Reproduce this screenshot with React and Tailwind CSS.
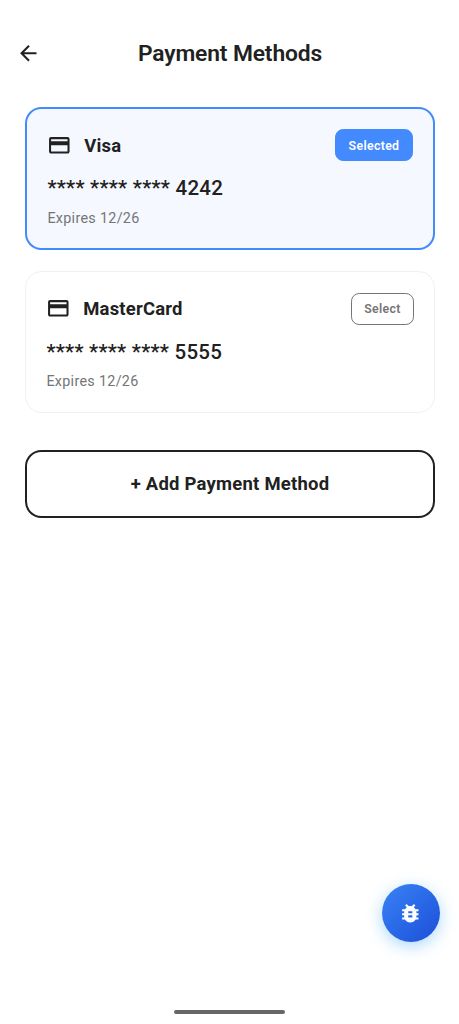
import { MdArrowBack, MdBugReport, MdPayment } from 'react-icons/md';

const methods = [
    { id: 1, brand: 'Visa', last4: '4242', expires: '12/26', selected: true },
    { id: 2, brand: 'MasterCard', last4: '5555', expires: '12/26', selected: false },
];

function PaymentCard({ method }) {
    const { brand, last4, expires, selected } = method;

    return (
        <li
            className={`rounded-[16.4px] pr-5 pl-[20.4px] ${
                selected
                    ? 'h-[143px] border-2 border-[#448aff] bg-[#f5f8ff] pt-5'
                    : 'h-[142px] border border-[#f0f0f0] bg-white pt-[20.5px]'
            }`}
        >
            <div className="flex h-8 items-center justify-between">
                <div className="flex items-center gap-[12.3px]">
                    <MdPayment className="size-[24.6px]" />
                    <h2
                        className={`text-[18.45px] leading-6 font-bold tracking-[0.2px] ${
                            selected ? 'pt-[2px]' : 'pt-0'
                        }`}
                    >
                        {brand}
                    </h2>
                </div>
                <button
                    className={`h-8 rounded-[8.2px] border text-[12.3px] leading-4 font-semibold tracking-[0.35px] ${
                        selected
                            ? 'w-[78px] border-[#448aff] bg-[#448aff] pt-[2px] text-white'
                            : 'w-[63px] border-[#757575] pt-0 text-[#757575]'
                    }`}
                >
                    {selected ? 'Selected' : 'Select'}
                </button>
            </div>
            <p className="mt-3 text-[20.5px] leading-[30px] font-medium tracking-[0.25px]">**** **** **** {last4}</p>
            <p className="mt-[5.5px] text-[14.35px] leading-5 tracking-[0.3px] text-[#757575]">Expires {expires}</p>
        </li>
    );
}

export default function App() {
    return (
        <div className="relative flex h-screen flex-col bg-white font-[Roboto,sans-serif] text-[#212121]">
            <header className="grid grid-cols-[57px_1fr_56px] items-center pt-[38px]">
                <button className="flex justify-center" aria-label="Back">
                    <MdArrowBack className="size-[24.6px]" />
                </button>
                <h1 className="pt-px text-center text-[22.8px] leading-[30px] font-semibold tracking-[-0.13px]">Payment Methods</h1>
            </header>

            <main className="pt-[38px] pr-6 pl-[25px]">
                <ul className="flex flex-col gap-[21px]">
                    {methods.map((method) => (
                        <PaymentCard key={method.id} method={method} />
                    ))}
                </ul>
                <button className="mt-[37px] h-[68px] w-full rounded-[16.4px] border-2 border-[#212121] pt-px text-[18.45px] font-bold tracking-[0.25px]">
                    + Add Payment Method
                </button>
            </main>

            <button
                aria-label="Report a bug"
                className="absolute right-[19.5px] bottom-[82px] flex size-[58px] items-center justify-center rounded-full bg-linear-to-br from-[#3b82f6] to-[#1d4ed8] text-white shadow-[0_4px_16px_rgba(33,150,243,0.38)]"
            >
                <MdBugReport className="size-[24.6px]" />
            </button>

            <div className="mt-auto mb-[10px] ml-[174.4px] h-1 w-[111px] rounded-full bg-[#666866]" />
        </div>
    );
}
